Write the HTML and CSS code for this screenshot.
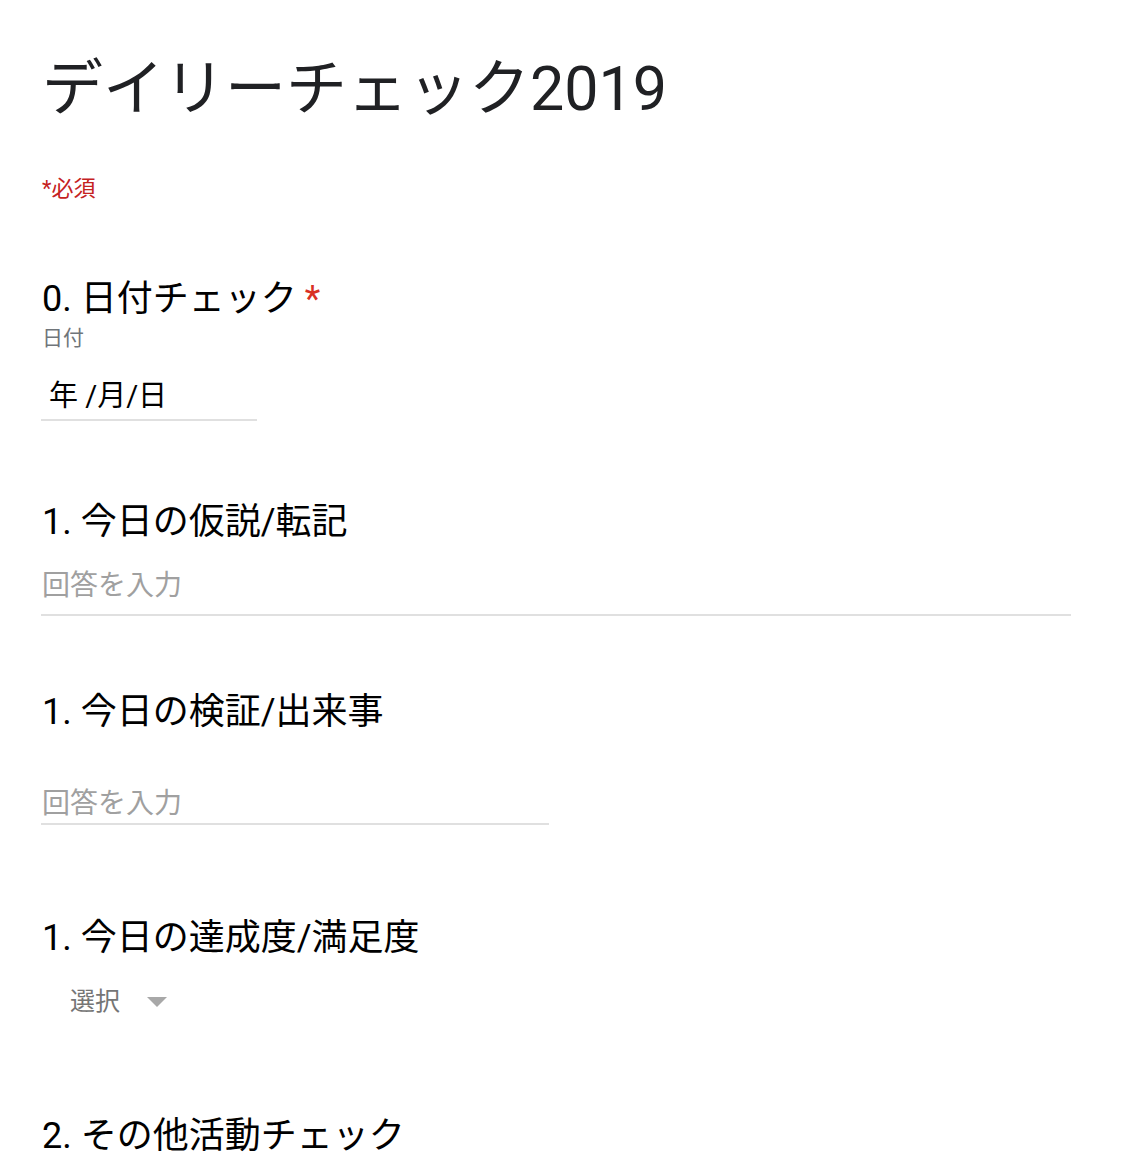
FILE: index.html
```html
<!DOCTYPE html>
<html lang="ja">
<head>
<meta charset="utf-8">
<title>デイリーチェック2019</title>
<link rel="stylesheet" href="styles.css">
</head>
<body>
<main class="form">
  <header class="form-header">
    <h1 class="form-title">デイリーチェック2019</h1>
    <div class="required-note">*必須</div>
  </header>

  <section class="question question-date">
    <div class="q-title">0. 日付チェック<span class="req">*</span></div>
    <div class="q-desc">日付</div>
    <div class="date-field">年 /月/日</div>
  </section>

  <section class="question">
    <div class="q-title">1. 今日の仮説/転記</div>
    <div class="text-field text-field-wide">回答を入力</div>
  </section>

  <section class="question question-para">
    <div class="q-title">1. 今日の検証/出来事</div>
    <div class="text-field text-field-half">回答を入力</div>
  </section>

  <section class="question question-select">
    <div class="q-title">1. 今日の達成度/満足度</div>
    <div class="select-field">
      <span class="select-label">選択</span>
      <svg class="select-arrow" width="20" height="10" viewBox="0 0 20 10"><polygon points="0,0 20,0 10,10"/></svg>
    </div>
  </section>

  <section class="question">
    <div class="q-title">2. その他活動チェック</div>
  </section>
</main>
</body>
</html>
```

FILE: styles.css
```css
html, body {
  margin: 0;
  padding: 0;
  background: #ffffff;
}

body {
  font-family: Roboto, "Noto Sans CJK JP", sans-serif;
  color: #202124;
}

.form {
  padding: 53px 0 0 42px;
  width: 1030px;
}

.form-title {
  margin: 0;
  font-size: 61px;
  line-height: 72px;
  font-weight: 400;
  color: #202124;
}

.required-note {
  margin-top: 50px;
  font-size: 22px;
  line-height: 28px;
  color: #c5221f;
}

.question {
  margin-top: 74px;
}

.question-date {
  padding-bottom: 5px;
}

.question-para {
  padding-bottom: 17px;
}

.question-select {
  padding-bottom: 22px;
}

.q-title {
  font-size: 36px;
  line-height: 44px;
  color: #000000;
}

.req {
  color: #d93025;
  margin-left: 8px;
}

.q-desc {
  margin-top: 4px;
  font-size: 21px;
  line-height: 26px;
  color: #70757a;
}

.date-field {
  margin-top: 27px;
  width: 208px;
  padding: 0 0 5px 8px;
  font-size: 29px;
  line-height: 36px;
  color: #000000;
  border-bottom: 2px solid #e0e0e0;
  margin-left: -1px;
}

.text-field {
  font-size: 28px;
  line-height: 36px;
  color: #a0a0a0;
  border-bottom: 2px solid #e0e0e0;
  margin-left: -1px;
  padding-left: 1px;
}

.text-field-wide {
  margin-top: 24px;
  width: 1029px;
  padding-bottom: 10px;
}

.text-field-half {
  margin-top: 52px;
  width: 507px;
  padding-bottom: 1px;
}

.select-field {
  margin-top: 26px;
  padding-left: 28px;
  display: flex;
  align-items: center;
  gap: 27px;
  height: 32px;
}

.select-label {
  font-size: 25px;
  line-height: 32px;
  color: #757575;
}

.select-arrow {
  fill: #a8a8a8;
  display: block;
}
```
